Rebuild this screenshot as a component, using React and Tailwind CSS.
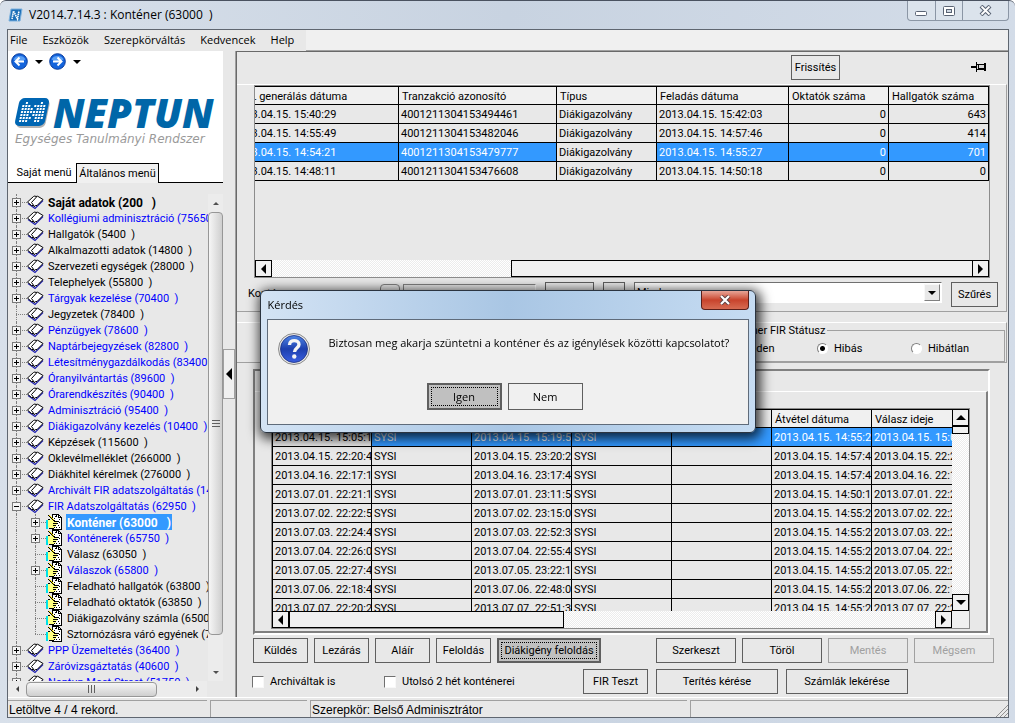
import React from "react";

const TREE = [
  { label: "Saját adatok (200   )", bold: true, box: "+" },
  { label: "Kollégiumi adminisztráció (75650", blue: true, box: "+" },
  { label: "Hallgatók (5400  )", box: "+" },
  { label: "Alkalmazotti adatok (14800  )", box: "+" },
  { label: "Szervezeti egységek (28000  )", box: "+" },
  { label: "Telephelyek (55800  )", box: "+" },
  { label: "Tárgyak kezelése (70400  )", blue: true, box: "+" },
  { label: "Jegyzetek (78400  )" },
  { label: "Pénzügyek (78600  )", blue: true, box: "+" },
  { label: "Naptárbejegyzések (82800  )", blue: true, box: "+" },
  { label: "Létesítménygazdálkodás (83400", blue: true, box: "+" },
  { label: "Óranyilvántartás (89600  )", blue: true, box: "+" },
  { label: "Órarendkészítés (90400  )", blue: true, box: "+" },
  { label: "Adminisztráció (95400  )", blue: true, box: "+" },
  { label: "Diákigazolvány kezelés (10400  )", blue: true, box: "+" },
  { label: "Képzések (115600  )", box: "+" },
  { label: "Oklevélmelléklet (266000  )", box: "+" },
  { label: "Diákhitel kérelmek (276000  )", box: "+" },
  { label: "Archivált FIR adatszolgáltatás (14", blue: true, box: "+" },
  { label: "FIR Adatszolgáltatás (62950  )", blue: true, box: "-" },
  { label: "Konténer (63000   )", child: true, selected: true, box: "+" },
  { label: "Konténerek (65750  )", child: true, blue: true, box: "+" },
  { label: "Válasz (63050  )", child: true },
  { label: "Válaszok (65800  )", child: true, blue: true, box: "+" },
  { label: "Feladható hallgatók (63800  )", child: true },
  { label: "Feladható oktatók (63850  )", child: true },
  { label: "Diákigazolvány számla (65000", child: true },
  { label: "Sztornózásra váró egyének (7", child: true, last: true },
  { label: "PPP Üzemeltetés (36400  )", blue: true, box: "+" },
  { label: "Záróvizsgáztatás (40600  )", blue: true, box: "+" },
  { label: "Neptun Meet Street (51750  )", blue: true, box: "+" },
];

const TOP_HEAD = [
  "XML generálás dátuma",
  "Tranzakció azonosító",
  "Típus",
  "Feladás dátuma",
  "Oktatók száma",
  "Hallgatók száma",
];

const TOP_ROWS = [
  ["2013.04.15. 15:40:29", "4001211304153494461", "Diákigazolvány", "2013.04.15. 15:42:03", "0", "643"],
  ["2013.04.15. 14:55:49", "4001211304153482046", "Diákigazolvány", "2013.04.15. 14:57:46", "0", "414"],
  ["2013.04.15. 14:54:21", "4001211304153479777", "Diákigazolvány", "2013.04.15. 14:55:27", "0", "701"],
  ["2013.04.15. 14:48:11", "4001211304153476608", "Diákigazolvány", "2013.04.15. 14:50:18", "0", "0"],
];

const BOTTOM_ROWS = [
  ["2013.04.15. 15:05:11", "SYSI", "2013.04.15. 15:19:50", "SYSI", "", "2013.04.15. 14:55:27", "2013.04.15. 15:05:11"],
  ["2013.04.15. 22:20:44", "SYSI", "2013.04.15. 23:20:21", "SYSI", "", "2013.04.15. 14:57:46", "2013.04.15. 22:20:44"],
  ["2013.04.16. 22:17:12", "SYSI", "2013.04.16. 23:17:41", "SYSI", "", "2013.04.15. 14:57:46", "2013.04.16. 22:17:12"],
  ["2013.07.01. 22:21:15", "SYSI", "2013.07.01. 23:11:52", "SYSI", "", "2013.04.15. 14:50:18", "2013.07.01. 22:21:15"],
  ["2013.07.02. 22:22:51", "SYSI", "2013.07.02. 23:15:03", "SYSI", "", "2013.04.15. 14:55:27", "2013.07.02. 22:22:51"],
  ["2013.07.03. 22:24:42", "SYSI", "2013.07.03. 22:52:33", "SYSI", "", "2013.04.15. 14:55:27", "2013.07.03. 22:24:42"],
  ["2013.07.04. 22:26:01", "SYSI", "2013.07.04. 22:55:41", "SYSI", "", "2013.04.15. 14:55:27", "2013.07.04. 22:26:01"],
  ["2013.07.05. 22:27:40", "SYSI", "2013.07.05. 23:22:14", "SYSI", "", "2013.04.15. 14:55:27", "2013.07.05. 22:27:40"],
  ["2013.07.06. 22:18:43", "SYSI", "2013.07.06. 22:48:02", "SYSI", "", "2013.04.15. 14:55:27", "2013.07.06. 22:18:43"],
  ["2013.07.07. 22:20:21", "SYSI", "2013.07.07. 22:51:31", "SYSI", "", "2013.04.15. 14:55:27", "2013.07.07. 22:20:21"],
];

const DOTS = "bg-[repeating-conic-gradient(#fff_0_25%,#ececec_0_50%)] bg-[length:2px_2px]";
const CELL = "h-[19px] p-0 pl-0.5 pt-0.5 border-r border-b border-black overflow-hidden whitespace-nowrap";
const HEAD =
  "h-[18px] p-0 pl-[3px] pt-0.5 border-r border-b border-black bg-[#f0f0f0] text-left font-normal overflow-hidden whitespace-nowrap";

function Arrow({ dir, size = 4, color = "#000" }) {
  const d = {
    left: `M${size} 0V${size * 2}L0 ${size}Z`,
    right: `M0 0V${size * 2}L${size} ${size}Z`,
    up: `M0 ${size}H${size * 2}L${size} 0Z`,
    down: `M0 0H${size * 2}L${size} ${size}Z`,
  }[dir];
  const flat = dir === "up" || dir === "down";
  return (
    <svg width={flat ? size * 2 : size} height={flat ? size : size * 2} fill={color} aria-hidden="true">
      <path d={d} />
    </svg>
  );
}

function BookIcon() {
  return (
    <svg width="17" height="16" viewBox="0 0 17 16" className="shrink-0" aria-hidden="true">
      <path d="M1 9.500l7 5 8-8" fill="none" stroke="#2020b0" strokeWidth="1.200" />
      <path d="M.5 8L6.500 2.500q1.500-1 2.500 0 1.500-.8 3 .5l4 2.500-6 6q-1.500-.5-2.500 1-1.500-1.500-3-1z" fill="#fff" stroke="#000" />
      <path d="M9.500 3L4.500 8.500l3 4" fill="none" stroke="#000" />
    </svg>
  );
}

function FormIcon() {
  return (
    <svg width="17" height="16" viewBox="0 0 17 16" className="shrink-0" shapeRendering="crispEdges" aria-hidden="true">
      {/* sheet */}
      <path d="M6 0h7v1h1v1h1v1h1v13H6z" fill="#000" />
      <path d="M7 1h5v3h3v11H7z" fill="#fff" />
      <path d="M13 2h1v1h-1z" fill="#fff" />
      <path d="M9 2h1v1H9zM13 5h1v1h-1zM12 7h1v1h-1zM14 8h-1v1h1zM12 11h1v1h-1zM13 13h1v1h-1zM10 13h1v1h-1zM8 14h1v-1H8z" fill="#000" />
      {/* cuff and hand */}
      <path d="M0 6h2v9H0z" fill="#00e0e8" />
      <path d="M2 6h3V5h3v1h1v1h3v1h-1v1H9v1h2v1H9v1h1v1H8v1H3v-1H2z" fill="#ffff80" />
      <path d="M2 5h2v1H2zM8 6h1v1H8zM9 7h3v1H9zM7 9h5v1H7zM7 11h3v1H7zM3 14h5v1H3z" fill="#000" />
      {/* pencil */}
      <path d="M2 1h2v1h1v1h1v1h1v1h1v1h1v2H8V7H7V6H6V5H5V4H4V3H3V2H2z" fill="#000" />
      <path d="M3 1h1v1h1v1h1v1h1v1h1v1H7V5H6V4H5V3H4V2H3z" fill="#ffe800" />
      <path d="M10 1h1v2H9v2H8V4h1V2h1z" fill="#000" />
    </svg>
  );
}

function TreeBox({ sign }) {
  return (
    <svg width="9" height="9" shapeRendering="crispEdges" className="relative shrink-0" aria-hidden="true">
      <rect x=".5" y=".5" width="8" height="8" fill="#f4f4f4" stroke="#7a7a7a" />
      <path d={sign === "+" ? "M2 4.500h5M4.500 2v5" : "M2 4.500h5"} stroke="#000" />
    </svg>
  );
}

function TreeRow({ item }) {
  let text = "text-[11px]";
  if (item.bold) text = "text-[12px] font-bold";
  if (item.selected) text = "text-[12px] font-bold text-white bg-[#3399ff]";
  if (item.blue) text = "text-[11px] text-[#0000ff]";
  return (
    <li className="flex h-4 items-center whitespace-pre">
      <span className={"relative flex h-4 shrink-0 items-center " + (item.child ? "w-[38px] pl-[23px]" : "w-[19px] pl-1")}>
        <span className="absolute left-2 top-0 h-4 border-l border-dotted border-[#808080]" />
        {item.child && (
          <span
            className={
              "absolute left-[27px] top-0 border-l border-dotted border-[#808080] " + (item.last ? "h-2" : "h-4")
            }
          />
        )}
        <span
          className={
            "absolute right-0 top-2 border-t border-dotted border-[#808080] " +
            (item.child ? "left-[27px]" : "left-2")
          }
        />
        {item.box && <TreeBox sign={item.box} />}
      </span>
      {item.child ? <FormIcon /> : <BookIcon />}
      <span className={"ml-[3px] px-px pt-0.5 leading-[14px] " + text}>{item.label}</span>
    </li>
  );
}

function NavArrow({ back }) {
  return (
    <button type="button" className="flex items-center gap-[7px]" aria-label={back ? "Vissza" : "Előre"}>
      <svg width="17" height="17" viewBox="0 0 17 17" aria-hidden="true">
        <circle cx="8.500" cy="8.500" r="7.800" fill="#1464dc" stroke="#0a3c9c" />
        <path d="M2.500 6.500a6.500 5.500 0 0 1 12 0q-6 3-12 0z" fill="#5aa0f5" />
        <path
          d={back ? "M13 8.500H5M8.500 4.500l-4 4 4 4" : "M4 8.500h8M8.500 4.500l4 4-4 4"}
          fill="none"
          stroke="#fff"
          strokeWidth="2"
        />
      </svg>
      <Arrow dir="down" />
    </button>
  );
}

function LogoMark() {
  const dots = [];
  const rows = ["01000010", "11101111", "11110111", "11111111", "11101111", "11110111", "11100110"];
  rows.forEach((r, y) =>
    r.split("").forEach((c, x) => {
      if (c === "1") dots.push(<rect key={x + "-" + y} x={5 + x * 3} y={4 + y * 3} width="2" height="2" />);
    })
  );
  return (
    <svg width="38" height="32" viewBox="0 0 38 32" className="shrink-0" aria-hidden="true">
      <g transform="translate(6 1) skewX(-12)">
        <rect x="3" y="2" width="29" height="28" rx="5" fill="#b4b4b4" />
        <rect x="1" y="0" width="30" height="28" rx="5" fill="#0066b3" />
        <g fill="#fff">{dots}</g>
      </g>
    </svg>
  );
}

function PushButton({ children, className = "", disabled, active }) {
  let look = "border border-[#5f5f5f] pt-px text-black";
  if (disabled) look = "border border-[#a0a0a0] pt-px text-[#a0a0a0]";
  if (active) look = "border-2 border-[#5f5f5f] bg-[#c0c0c0] text-black p-0.5";
  return (
    <button type="button" disabled={disabled} className={"h-[25px] shrink-0 whitespace-nowrap " + look + " " + className}>
      {active ? (
        <span className="flex h-full items-center justify-center border border-dotted border-black pt-px">{children}</span>
      ) : (
        children
      )}
    </button>
  );
}

function ScrollButton({ dir }) {
  return (
    <button
      type="button"
      aria-label={dir}
      className="flex h-[17px] w-[17px] shrink-0 items-center justify-center border border-black bg-[#f0f0f0]"
    >
      <Arrow dir={dir} size={5} />
    </button>
  );
}

function TitleBar() {
  return (
    <header className="flex h-7 shrink-0 items-center">
      <svg width="15" height="14" viewBox="0 0 15 14" className="ml-px" aria-hidden="true">
        <path d="M3 1h11l-2 12H1z" fill="#1d6fb8" stroke="#7fb2de" />
        <path d="M4 11l1.500-8 4 8L11 3" fill="none" stroke="#fff" strokeWidth="1.600" strokeDasharray="1.500 .6" />
      </svg>
      <h1 className="ml-1.5 whitespace-pre font-['Open_Sans',sans-serif] text-[12px]">
        V2014.7.14.3 : Konténer (63000  )
      </h1>
      <div className="ml-auto flex h-5 self-start rounded-b border border-t-0 border-[#8b96a5] bg-[#dbe3ec]">
        <button type="button" aria-label="Kis méret" className="flex w-[28px] items-center justify-center border-r border-[#8b96a5]">
          <svg width="13" height="12"><rect x=".5" y="6.500" width="11" height="4" rx="1" fill="#fff" stroke="#5a6474" /></svg>
        </button>
        <button type="button" aria-label="Teljes méret" className="flex w-[27px] items-center justify-center border-r border-[#8b96a5]">
          <svg width="12" height="10">
            <rect x=".5" y=".5" width="11" height="9" rx="1" fill="#fff" stroke="#5a6474" />
            <rect x="3.500" y="3.500" width="5" height="3" fill="#cfd8e3" stroke="#5a6474" />
          </svg>
        </button>
        <button type="button" aria-label="Bezárás" className="flex w-[45px] items-center justify-center">
          <svg width="13" height="11" viewBox="0 0 13 11">
            <path d="M2 1l9 9M11 1l-9 9" stroke="#5a6474" strokeWidth="4" />
            <path d="M2.500 1.500l8 8M10.500 1.500l-8 8" stroke="#fff" strokeWidth="1.800" />
          </svg>
        </button>
      </div>
    </header>
  );
}

function MenuBar() {
  return (
    <div className="flex h-[21px] shrink-0 font-['Open_Sans',sans-serif] text-[11px]">
      <nav className="flex items-center gap-[15px] bg-[#e8e8e8] pb-0.5 pl-0.5 pr-3">
        {["File", "Eszközök", "Szerepkörváltás", "Kedvencek", "Help"].map((m) => (
          <button type="button" key={m}>
            {m}
          </button>
        ))}
      </nav>
      <div className="flex-1 border-b border-[#a0a0a0] bg-[#f0f0f0]" />
    </div>
  );
}

function SidePanel() {
  return (
    <aside className="flex w-[215px] shrink-0 flex-col">
      <div className="flex h-[132px] shrink-0 flex-col bg-white">
        <div className="flex gap-1.5 pl-[3px] pt-0.5">
          <NavArrow back />
          <NavArrow />
        </div>
        <div className="mt-[27px] pl-[5px]">
          <div className="flex h-8 items-center">
            <LogoMark />
            <span className="ml-0.5 font-['Open_Sans',sans-serif] text-[40px] font-extrabold italic leading-8 text-[#0066a8]">
              NEPTUN
            </span>
          </div>
          <p className="whitespace-nowrap pl-0.5 pt-0.5 font-['DejaVu_Sans',sans-serif] text-[12px] italic leading-4 text-[#9a9a9a]">
            Egységes Tanulmányi Rendszer
          </p>
        </div>
        <div className="mt-auto flex h-5 items-stretch">
          <button type="button" className="w-[68px] border-b border-black pl-1 pt-px">
            Saját menü
          </button>
          <button type="button" className="w-[83px] border border-b-0 border-black bg-[#f0f0f0] pt-px">
            Általános menü
          </button>
          <span className="flex-1 border-b border-black" />
        </div>
      </div>
      <div className="flex min-h-0 flex-1 pt-[11px]">
        <ul className="min-w-0 flex-1 overflow-hidden">
          {TREE.map((item) => (
            <TreeRow key={item.label} item={item} />
          ))}
        </ul>
        <div className="flex w-[15px] shrink-0 flex-col items-center bg-[#ececec]">
          <span className="flex h-[18px] items-center"><Arrow dir="up" size={3} color="#505050" /></span>
          <div className="flex w-full flex-1 flex-col items-center justify-center gap-px rounded-sm border border-[#979797] bg-linear-to-r from-[#f6f6f6] to-[#cfcfcf]">
            <span className="h-px w-2 bg-[#606060]" />
            <span className="mt-px h-px w-2 bg-[#606060]" />
            <span className="mt-px h-px w-2 bg-[#606060]" />
          </div>
          <span className="flex h-[46px] items-end pb-[7px]"><Arrow dir="down" size={3} color="#505050" /></span>
        </div>
      </div>
      <div className="mr-4 flex h-4 shrink-0 items-center bg-[#ececec]">
        <span className="flex w-[18px] justify-center"><Arrow dir="left" size={3} color="#404040" /></span>
        <div className="flex h-[15px] w-[131px] items-center justify-center gap-0.5 rounded-sm border border-[#979797] bg-linear-to-b from-[#f6f6f6] to-[#cfcfcf]">
          <span className="h-2 w-px bg-[#606060]" />
          <span className="h-2 w-px bg-[#606060]" />
          <span className="h-2 w-px bg-[#606060]" />
        </div>
        <span className="ml-auto pr-2"><Arrow dir="right" size={3} color="#404040" /></span>
      </div>
    </aside>
  );
}

function TopGrid() {
  return (
    <div className="flex h-[193px] flex-col border border-[#8c8c8c]">
      <div className="flex min-h-0 flex-1 justify-end overflow-hidden">
        <table className="w-[758px] shrink-0 table-fixed border-separate border-spacing-0 self-start border-t border-black">
          <colgroup>
            <col className="w-[168px]" />
            <col className="w-[158px]" />
            <col className="w-[100px]" />
            <col className="w-[132px]" />
            <col className="w-[100px]" />
            <col />
          </colgroup>
          <thead>
            <tr>
              {TOP_HEAD.map((h) => (
                <th key={h} className={HEAD}>{h}</th>
              ))}
            </tr>
          </thead>
          <tbody>
            {TOP_ROWS.map((row, r) => (
              <tr key={r}>
                {row.map((c, i) => (
                  <td
                    key={i}
                    className={
                      CELL +
                      (i > 3 ? " pr-0.5 text-right" : "") +
                      (r === 2 && i !== 2 ? " bg-[#3399ff] text-white" : "")
                    }
                  >
                    {c}
                  </td>
                ))}
              </tr>
            ))}
          </tbody>
        </table>
      </div>
      <div className={"flex h-[17px] " + DOTS}>
        <ScrollButton dir="left" />
        <div className="ml-[239px] flex-1 border border-r-0 border-black bg-[#f0f0f0]" />
        <ScrollButton dir="right" />
      </div>
    </div>
  );
}

function BottomGrid() {
  return (
    <div className="flex min-h-0 min-w-0 flex-1 border border-[#8c8c8c]">
      <div className="flex min-w-0 flex-1 flex-col">
        <div className="min-h-0 flex-1 overflow-hidden border-l border-black">
          <table className="w-[700px] table-fixed border-separate border-spacing-0 border-t border-black">
            <colgroup>
              <col className="w-[99px]" />
              <col className="w-[100px]" />
              <col className="w-[100px]" />
              <col className="w-[100px]" />
              <col className="w-[100px]" />
              <col className="w-[100px]" />
              <col />
            </colgroup>
            <thead>
              <tr>
                {["", "", "", "", "", "Átvétel dátuma", "Válasz ideje"].map((h, i) => (
                  <th key={i} className={HEAD}>{h}</th>
                ))}
              </tr>
            </thead>
            <tbody>
              {BOTTOM_ROWS.map((row, r) => (
                <tr key={r}>
                  {row.map((c, i) => (
                    <td key={i} className={CELL + (r === 0 && i > 0 ? " bg-[#3399ff] text-white" : "")}>
                      {c}
                    </td>
                  ))}
                </tr>
              ))}
            </tbody>
          </table>
        </div>
        <div className={"flex h-[17px] shrink-0 justify-between " + DOTS}>
          <div className="flex">
            <ScrollButton dir="left" />
            <div className="w-[275px] border border-black bg-[#f0f0f0]" />
          </div>
          <ScrollButton dir="right" />
        </div>
      </div>
      <div className="flex w-[17px] shrink-0 flex-col">
        <div className={"flex flex-1 flex-col " + DOTS}>
          <ScrollButton dir="up" />
          <div className="h-2 border border-black bg-[#f0f0f0]" />
          <div className="flex-1" />
          <ScrollButton dir="down" />
        </div>
        <div className="h-[17px] bg-[#f0f0f0]" />
      </div>
    </div>
  );
}

function Radio({ label, checked }) {
  return (
    <label className="flex items-center gap-1.5">
      <input
        type="radio"
        name="fir"
        defaultChecked={checked}
        className="h-[11px] w-[11px] appearance-none rounded-full border border-[#808080] border-b-white border-r-white bg-white checked:bg-[radial-gradient(#000_0_2px,#fff_3px)]"
      />
      {label}
    </label>
  );
}

function Check({ label }) {
  return (
    <label className="flex items-center gap-1.5">
      <input
        type="checkbox"
        className="h-3 w-3 appearance-none border border-[#707070] border-b-[#f8f8f8] border-r-[#f8f8f8] bg-white"
      />
      {label}
    </label>
  );
}

function FilterRow() {
  return (
    <div className="mt-1 flex h-6 items-start gap-[9px] pl-[11px] pr-2">
      <label htmlFor="container" className="mt-[5px] w-[123px]">Konténer</label>
      <div className="flex gap-[3px]">
        <button type="button" aria-label="Választás" className="mt-0.5 h-5 w-5 rounded-sm border border-[#808080]" />
        <input id="container" className="mt-0.5 h-5 w-[133px] border border-[#808080] border-b-white border-r-white" />
      </div>
      <PushButton className="h-6 w-[49px]">Keresés</PushButton>
      <PushButton className="h-6 w-[22px]"> </PushButton>
      <div className="relative h-[21px] min-w-0 flex-1">
        <select
          aria-label="Szűrő"
          className="h-[21px] w-full appearance-none border border-[#707070] border-b-white border-r-white bg-white pl-0.5"
        >
          <option>Minden</option>
        </select>
        <span className="pointer-events-none absolute inset-y-0.5 right-0.5 flex w-4 items-center justify-center border border-b-[#808080] border-l-[#f8f8f8] border-r-[#808080] border-t-[#f8f8f8] bg-[#e8e8e8]">
          <Arrow dir="down" />
        </span>
      </div>
      <PushButton className="h-[23px] w-[47px]">Szűrés</PushButton>
    </div>
  );
}

function Workspace() {
  return (
    <main className="flex min-w-0 flex-1 border-l border-[#a0a0a0]">
      <div className="flex min-w-0 flex-1 flex-col border-l border-t border-[#696969]">
        <div className="flex h-8 shrink-0 items-center pb-0.5 pr-[22px]">
          <PushButton className="ml-auto w-[49px]">Frissítés</PushButton>
          <svg width="15" height="10" viewBox="0 0 15 10" className="ml-[131px]" shapeRendering="crispEdges" aria-label="Rögzítés">
            <path d="M0 4h5v2H0zM5 0h1v10H5zM6 2h2v6H6zM8 2h5v1H8zM8 6h5v2H8zM13 1h2v8h-2z" />
            <path d="M6 3h1v4H6zM8 3h5v3H8z" fill="#d8d8d8" />
          </svg>
        </div>
        <section className="mr-px flex h-[228px] shrink-0 flex-col border-b border-r border-t border-b-[#a0a0a0] border-r-[#a0a0a0] border-t-white">
          <div className="pl-[17px] pr-4">
            <TopGrid />
          </div>
          <FilterRow />
        </section>
        <section className="mr-px mt-2.5 flex h-[41px] shrink-0 justify-end border-b border-r border-t border-b-[#a0a0a0] border-r-[#a0a0a0] border-t-white pr-px">
          <fieldset className="flex h-[39px] w-[294px] items-center border border-[#a0a0a0] pb-0.5 pl-[9px]">
            <legend className="px-0.5 pt-px leading-[14px]">Konténer FIR Státusz</legend>
            <div className="flex h-4 items-center">
              <span className="w-24"><Radio label="Minden" /></span>
              <span className="w-[94px]"><Radio label="Hibás" checked /></span>
              <Radio label="Hibátlan" />
            </div>
          </fieldset>
        </section>
        <div className="ml-4 mr-[18px] mt-1.5 flex min-h-0 min-w-0 flex-1 border-2 border-b-white border-l-[#808080] border-r-white border-t-[#808080]">
          <div className="mt-5 flex min-h-0 min-w-0 flex-1 border-b-2 border-r-2 border-t border-b-[#808080] border-r-[#808080] border-t-white pb-0.5 pl-4 pr-4 pt-4">
            <BottomGrid />
          </div>
        </div>
        <div className="mt-[3px] flex shrink-0 pl-4 pr-3.5">
          <div className="flex gap-1.5">
            <PushButton className="w-[55px]">Küldés</PushButton>
            <PushButton className="w-[55px]">Lezárás</PushButton>
            <PushButton className="w-[55px]">Aláír</PushButton>
            <PushButton className="w-[55px]">Feloldás</PushButton>
            <PushButton className="w-[104px]" active>Diákigény feloldás</PushButton>
          </div>
          <div className="ml-auto flex gap-1.5">
            <PushButton className="w-20">Szerkeszt</PushButton>
            <PushButton className="w-20">Töröl</PushButton>
            <PushButton className="w-20" disabled>Mentés</PushButton>
            <PushButton className="w-20" disabled>Mégsem</PushButton>
          </div>
        </div>
        <div className="mb-[3px] mt-1.5 flex shrink-0 items-center pl-[15px] pr-[100px]">
          <span className="w-[132px]"><Check label="Archiváltak is" /></span>
          <Check label="Utolsó 2 hét konténerei" />
          <div className="ml-auto flex gap-2">
            <PushButton className="w-[65px]">FIR Teszt</PushButton>
            <PushButton className="w-[122px]">Terítés kérése</PushButton>
            <PushButton className="w-[122px]">Számlák lekérése</PushButton>
          </div>
        </div>
      </div>
    </main>
  );
}

function StatusBar() {
  const cell = "border-l border-t border-[#a0a0a0] pl-px pt-px leading-4";
  return (
    <footer className="flex h-5 shrink-0 gap-[3px] border-t border-white pt-0.5 font-['Liberation_Sans',Arial,sans-serif] text-[12px]">
      <div className={cell + " w-[199px] border-l-0 pl-0.5"}>Letöltve 4 / 4 rekord.</div>
      <div className={cell + " w-[97px]"} />
      <div className={cell + " w-[377px]"}>Szerepkör: Belső Adminisztrátor</div>
      <div className={cell + " flex flex-1 items-end justify-end"}>
        <svg width="12" height="12" stroke="#909090" aria-hidden="true">
          <path d="M0 12L12 0M4 12l8-8M8 12l4-4" />
        </svg>
      </div>
    </footer>
  );
}

function QuestionDialog() {
  return (
    <div className="fixed inset-0 flex items-center justify-center">
      <div
        role="dialog"
        aria-label="Kérdés"
        className="w-[496px] rounded-md border border-[#2b3440] bg-linear-to-r from-[#d3e3f4] via-[#a9c6e4] to-[#c6dcf2] px-1.5 pb-[7px] font-['Open_Sans',sans-serif] text-[11px] shadow-[2px_3px_12px_3px_rgba(0,0,0,0.75)]"
      >
        <div className="flex h-7 items-center pl-px">
          <h2>Kérdés</h2>
          <button
            type="button"
            aria-label="Bezárás"
            className="ml-auto flex h-[19px] w-12 items-center justify-center self-start rounded-b border border-t-0 border-[#5b1f1a] bg-linear-to-b from-[#e6a497] via-[#c8432c] to-[#d66b52]"
          >
            <svg width="12" height="10" viewBox="0 0 12 10">
              <path d="M2 1l8 8M10 1L2 9" stroke="#5a4040" strokeWidth="4" />
              <path d="M2 1l8 8M10 1L2 9" stroke="#fff" strokeWidth="2.200" />
            </svg>
          </button>
        </div>
        <div className="border border-[#5f6b7a] bg-[#f0f0f0] px-2.5 pb-3.5 pt-[13px]">
          <div className="flex items-start gap-[19px]">
            <svg width="32" height="32" viewBox="0 0 32 32" className="shrink-0" aria-hidden="true">
              <defs>
                <linearGradient id="q" x1="0" y1="0" x2="0" y2="1">
                  <stop offset="0" stopColor="#4f86e6" />
                  <stop offset=".5" stopColor="#1d3fae" />
                  <stop offset="1" stopColor="#3a5fe0" />
                </linearGradient>
              </defs>
              <circle cx="16" cy="16" r="15.500" fill="#e8e8e8" stroke="#8a8a8a" />
              <circle cx="16" cy="16" r="13.500" fill="url(#q)" stroke="#1a2f80" strokeWidth=".8" />
              <path d="M11.500 12c0-6 9.500-5.500 9.500-.5 0 3.500-4.500 3.500-4.500 7.500" fill="none" stroke="#f4f4f4" strokeWidth="3.400" />
              <circle cx="16.300" cy="23.500" r="2.200" fill="#f4f4f4" />
            </svg>
            <p className="whitespace-nowrap leading-5">
              Biztosan meg akarja szüntetni a konténer és az igénylések közötti kapcsolatot?
            </p>
          </div>
          <div className="mt-[18px] flex justify-center gap-1.5 pr-1.5">
            <PushButton className="h-[27px] w-[75px]" active>Igen</PushButton>
            <PushButton className="h-[27px] w-[75px]">Nem</PushButton>
          </div>
        </div>
      </div>
    </div>
  );
}

export default function App() {
  return (
    <div className="flex h-screen flex-col overflow-hidden rounded-t-md border-t border-[#4a5260] bg-linear-to-r from-[#d8e0ea] via-[#c8d3e1] to-[#d3dce8] pb-[5px] pl-[7px] pr-1.5 font-[Roboto,Arial,sans-serif] text-[11px] leading-[14px] text-black">
      <TitleBar />
      <div className="flex min-h-0 flex-1 flex-col border border-[#5f6670] bg-[#e8e8e8]">
        <MenuBar />
        <div className="flex min-h-0 flex-1">
          <SidePanel />
          <div className="flex w-3 shrink-0 items-center">
            <button
              type="button"
              aria-label="Menü elrejtése"
              className="flex h-[50px] w-3 items-center justify-center border border-[#a0a0a0] bg-[#f0f0f0]"
            >
              <Arrow dir="left" size={6} />
            </button>
          </div>
          <Workspace />
        </div>
        <StatusBar />
      </div>
      <QuestionDialog />
    </div>
  );
}
